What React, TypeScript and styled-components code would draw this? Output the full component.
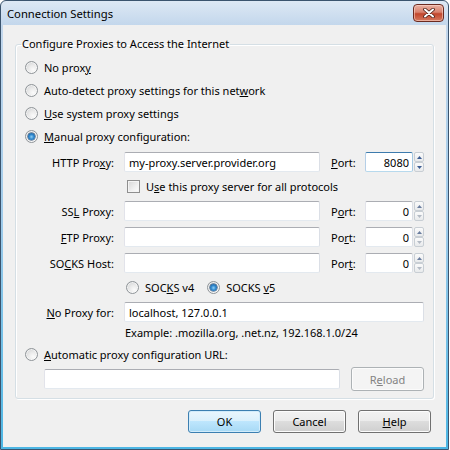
import styled, { createGlobalStyle, css } from 'styled-components';

const GlobalStyle = createGlobalStyle`
  html, body {
    margin: 0;
    padding: 0;
    background: #ffffff;
  }
  body {
    font-family: "Noto Sans", "Open Sans", sans-serif;
    font-size: 11px;
    color: #000;
  }
  * {
    box-sizing: border-box;
  }
`;

const Window = styled.div`
  width: 449px;
  height: 450px;
  display: flex;
  flex-direction: column;
  border: 1px solid #3b546e;
  border-radius: 6px 6px 0 0;
  background: linear-gradient(
    to bottom,
    #dde8f4 0px,
    #c3d7ec 24px,
    #9fcbea 220px,
    #4cb6e4 100%
  );
  overflow: hidden;
`;

const TitleBar = styled.div`
  height: 24px;
  flex: none;
  display: flex;
  align-items: flex-start;
  justify-content: space-between;
  padding: 0 4px 0 6px;
`;

const Title = styled.span`
  font-size: 11.25px;
  line-height: 26px;
  color: #000;
`;

const CloseButton = styled.div`
  width: 31px;
  height: 18px;
  margin-top: 3px;
  border: 1px solid #6b2a20;
  border-radius: 4px;
  display: flex;
  align-items: center;
  justify-content: center;
  background: linear-gradient(
    to bottom,
    #eab0a2 0%,
    #d8826e 45%,
    #c2462c 55%,
    #d5795f 100%
  );
  box-shadow: inset 0 0 0 1px rgba(255, 220, 210, 0.55);
`;

const Client = styled.div`
  flex: 1;
  margin: 0 2px 2px;
  background: #f0f0f0;
  padding: 12px 12px 0;
  display: flex;
  flex-direction: column;
`;

const Group = styled.fieldset`
  margin: 0;
  min-width: 0;
  padding: 5px 7px 7px 9px;
  border: 1px solid #d5dfe5;
  border-radius: 3px;
  box-shadow: inset 1px 1px 0 #ffffff, 1px 1px 0 #ffffff;
`;

const Legend = styled.legend`
  font-size: 11px;
  line-height: 14px;
  padding: 0 1px;
  margin-left: -4px;
`;

const Key = styled.u`
  text-decoration: underline;
  text-underline-offset: 1px;
`;

const OptionRow = styled.label<{ $h: number; $indent?: number }>`
  display: flex;
  align-items: center;
  gap: 6px;
  height: ${(p) => p.$h}px;
  padding-left: ${(p) => p.$indent ?? 0}px;
`;

const Radio = styled.span<{ $checked?: boolean }>`
  width: 13px;
  height: 13px;
  flex: none;
  border-radius: 50%;
  border: 1px solid #8f9498;
  background: radial-gradient(circle at 65% 70%, #fbfbfb 0%, #e9e9e9 45%, #c9cbcd 100%);
  box-shadow: inset 0 0 0 1px rgba(255, 255, 255, 0.6);
  display: flex;
  align-items: center;
  justify-content: center;

  ${(p) =>
    p.$checked &&
    css`
      &::after {
        content: '';
        width: 7px;
        height: 7px;
        border-radius: 50%;
        background: radial-gradient(circle at 50% 55%, #8fd0f6 0%, #2f86cc 45%, #174f86 100%);
        box-shadow: 0 0 0 0.5px #1b3f66;
      }
    `}
`;

const Checkbox = styled.span`
  width: 13px;
  height: 13px;
  flex: none;
  border: 1px solid #8f8f8f;
  background: linear-gradient(135deg, #d6d6d6 0%, #f0f0f0 60%, #fdfdfd 100%);
  box-shadow: inset 0 0 0 1px #f4f4f4;
`;

const FormRow = styled.div<{ $h: number; $mt?: number }>`
  display: grid;
  grid-template-columns: 99px 196px 45px 59px;
  align-items: center;
  height: ${(p) => p.$h}px;
  margin-top: ${(p) => p.$mt ?? 0}px;
`;

const FieldLabel = styled.span`
  text-align: right;
  padding-right: 10px;
  white-space: nowrap;
`;

const PortLabel = styled.span`
  padding-left: 11px;
`;

const Wide = styled.div<{ $pl?: number }>`
  grid-column: 2 / 5;
  display: flex;
  align-items: center;
  padding-left: ${(p) => p.$pl ?? 0}px;
`;

const TextBox = styled.input<{ $w?: number }>`
  width: ${(p) => (p.$w ? `${p.$w}px` : '100%')};
  height: 20px;
  margin: 0;
  padding: 0 4px;
  font-family: inherit;
  font-size: 11px;
  color: #000;
  background: #fff;
  border: 1px solid;
  border-color: #abadb3 #dbdfe6 #e3e9ef #e2e3ea;
  border-radius: 2px;
  outline: none;
`;

const PortBox = styled.div`
  display: flex;
  align-items: stretch;
  height: 20px;
`;

const PortInput = styled(TextBox)<{ $focused?: boolean }>`
  width: 48px;
  text-align: right;
  padding: 0 3px 0 2px;

  ${(p) =>
    p.$focused &&
    css`
      border-color: #3d7bad #a4c9e3 #b7d9ed #b5cfe7;
    `}
`;

const Spinner = styled.div`
  width: 11px;
  display: flex;
  flex-direction: column;
  padding-left: 1px;
`;

const SpinButton = styled.div`
  flex: 1;
  display: flex;
  align-items: center;
  justify-content: center;
  border: 1px solid #c8ced4;
  border-radius: 2px;
  background: linear-gradient(to bottom, #fbfbfb, #e8eaec);
`;

const Hint = styled.span`
  padding-left: 1px;
`;

const UrlRow = styled.div`
  display: flex;
  align-items: center;
  gap: 11px;
  padding-left: 19px;
  margin-top: 2px;
  height: 24px;
`;

const Button = styled.button<{ $default?: boolean; $w?: number }>`
  width: ${(p) => p.$w ?? 73}px;
  height: 23px;
  margin: 0;
  padding: 0;
  font-family: inherit;
  font-size: 11px;
  color: #000;
  border: 1px solid #707070;
  border-radius: 3px;
  background: linear-gradient(to bottom, #f2f2f2 0%, #ebebeb 50%, #dddddd 50%, #cfcfcf 100%);
  box-shadow: inset 0 0 0 1px #fcfcfc;

  ${(p) =>
    p.$default &&
    css`
      border-color: #3c7fb1;
      background: linear-gradient(to bottom, #eaf6fd 0%, #d9f0fc 50%, #bee6fd 50%, #a7d9f5 100%);
      box-shadow: inset 0 0 0 1px #d2ecfb;
    `}

  &:disabled {
    color: #838383;
    border-color: #adb2b5;
    background: #f4f4f4;
    box-shadow: inset 0 0 0 1px #fbfbfb;
  }
`;

const ReloadButton = styled(Button)`
  height: 24px;
`;

const ButtonBar = styled.div`
  display: flex;
  justify-content: flex-end;
  gap: 12px;
  margin-top: 11px;
  padding-right: 3px;
`;

const Arrow = ({ up, color }: { up?: boolean; color: string }) => (
  <svg width="5" height="3" viewBox="0 0 5 3">
    <path d={up ? 'M0 3 L2.5 0 L5 3 Z' : 'M0 0 L2.5 3 L5 0 Z'} fill={color} />
  </svg>
);

const Port = ({ value, focused }: { value: string; focused?: boolean }) => (
  <PortBox>
    <PortInput defaultValue={value} $focused={focused} readOnly />
    <Spinner>
      <SpinButton>
        <Arrow up color={focused ? '#3c5c92' : '#6a7d9e'} />
      </SpinButton>
      <SpinButton>
        <Arrow color={focused ? '#3c5c92' : '#b3bac4'} />
      </SpinButton>
    </Spinner>
  </PortBox>
);

const CloseGlyph = () => (
  <svg width="12" height="10" viewBox="0 0 12 10">
    <path d="M2 1.5 L10 8.5 M10 1.5 L2 8.5" stroke="#4a1e16" strokeWidth="3.6" strokeLinecap="round" />
    <path d="M2 1.5 L10 8.5 M10 1.5 L2 8.5" stroke="#ffffff" strokeWidth="2" strokeLinecap="round" />
  </svg>
);

const App = () => {
  return (
    <>
      <GlobalStyle />
      <Window>
        <TitleBar>
          <Title>Connection Settings</Title>
          <CloseButton>
            <CloseGlyph />
          </CloseButton>
        </TitleBar>
        <Client>
          <Group>
            <Legend>Configure Proxies to Access the Internet</Legend>

            <OptionRow $h={23}>
              <Radio />
              <span>
                No prox<Key>y</Key>
              </span>
            </OptionRow>
            <OptionRow $h={23}>
              <Radio />
              <span>
                Auto-detect proxy settings for this net<Key>w</Key>ork
              </span>
            </OptionRow>
            <OptionRow $h={23}>
              <Radio />
              <span>
                <Key>U</Key>se system proxy settings
              </span>
            </OptionRow>
            <OptionRow $h={23}>
              <Radio $checked />
              <span>
                <Key>M</Key>anual proxy configuration:
              </span>
            </OptionRow>

            <FormRow $h={20} $mt={4}>
              <FieldLabel>
                HTTP Pro<Key>x</Key>y:
              </FieldLabel>
              <TextBox defaultValue="my-proxy.server.provider.org" readOnly />
              <PortLabel>
                <Key>P</Key>ort:
              </PortLabel>
              <Port value="8080" focused />
            </FormRow>

            <FormRow $h={29}>
              <Wide $pl={3}>
                <OptionRow $h={29}>
                  <Checkbox />
                  <span>
                    U<Key>s</Key>e this proxy server for all protocols
                  </span>
                </OptionRow>
              </Wide>
            </FormRow>

            <FormRow $h={20}>
              <FieldLabel>
                SS<Key>L</Key> Proxy:
              </FieldLabel>
              <TextBox readOnly />
              <PortLabel>
                P<Key>o</Key>rt:
              </PortLabel>
              <Port value="0" />
            </FormRow>

            <FormRow $h={20} $mt={6}>
              <FieldLabel>
                <Key>F</Key>TP Proxy:
              </FieldLabel>
              <TextBox readOnly />
              <PortLabel>
                Po<Key>r</Key>t:
              </PortLabel>
              <Port value="0" />
            </FormRow>

            <FormRow $h={20} $mt={6}>
              <FieldLabel>
                SO<Key>C</Key>KS Host:
              </FieldLabel>
              <TextBox readOnly />
              <PortLabel>
                Por<Key>t</Key>:
              </PortLabel>
              <Port value="0" />
            </FormRow>

            <FormRow $h={29}>
              <Wide $pl={2}>
                <OptionRow $h={29}>
                  <Radio />
                  <span>
                    SOC<Key>K</Key>S v4
                  </span>
                </OptionRow>
                <OptionRow $h={29} $indent={13}>
                  <Radio $checked />
                  <span>
                    SOCKS <Key>v</Key>5
                  </span>
                </OptionRow>
              </Wide>
            </FormRow>

            <FormRow $h={20}>
              <FieldLabel>
                <Key>N</Key>o Proxy for:
              </FieldLabel>
              <Wide>
                <TextBox defaultValue="localhost, 127.0.0.1" readOnly />
              </Wide>
            </FormRow>

            <FormRow $h={21}>
              <Wide>
                <Hint>Example: .mozilla.org, .net.nz, 192.168.1.0/24</Hint>
              </Wide>
            </FormRow>

            <OptionRow $h={22}>
              <Radio />
              <span>
                <Key>A</Key>utomatic proxy configuration URL:
              </span>
            </OptionRow>

            <UrlRow>
              <TextBox $w={296} readOnly />
              <ReloadButton disabled>
                R<Key>e</Key>load
              </ReloadButton>
            </UrlRow>
          </Group>

          <ButtonBar>
            <Button $default>OK</Button>
            <Button>Cancel</Button>
            <Button>
              <Key>H</Key>elp
            </Button>
          </ButtonBar>
        </Client>
      </Window>
    </>
  );
};

export default App;
